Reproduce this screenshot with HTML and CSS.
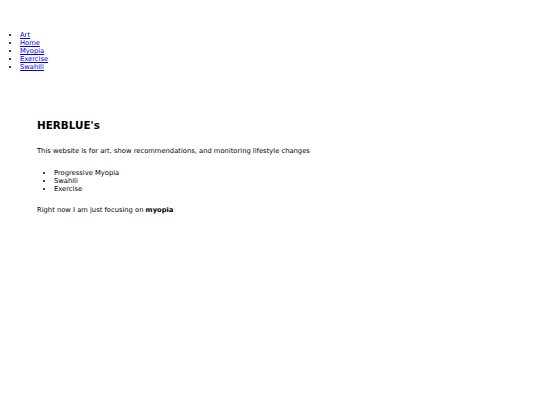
FILE: index.html
```html
<!DOCTYPE html>
<html>
<head>
<meta charset="utf-8">
<link rel="stylesheet" href="styles.css">
</head>
<body>
<nav class="nav">
  <ul class="nav-list">
    <li><a href="#">Art</a></li>
    <li><a href="#">Home</a></li>
    <li><a href="#">Myopia</a></li>
    <li><a href="#">Exercise</a></li>
    <li><a href="#">Swahili</a></li>
  </ul>
</nav>
<main class="main">
  <h1 class="title">HERBLUE's</h1>
  <p class="text">This website is for art, show recommendations, and monitoring lifestyle changes</p>
  <ul class="topics">
    <li>Progressive Myopia</li>
    <li>Swahili</li>
    <li>Exercise</li>
  </ul>
  <p class="text">Right now I am just focusing on <b>myopia</b></p>
</main>
</body>
</html>
```
FILE: styles.css
```css
html, body {
  margin: 0;
  padding: 0;
  background: #fff;
}
body {
  font-family: "DejaVu Sans", Verdana, sans-serif;
  font-size: 6.75px;
  line-height: 8px;
  color: #000;
}
.nav {
  padding-top: 31px;
}
.nav-list {
  margin: 0;
  padding-left: 20px;
}
.nav-list a {
  color: #0000ee;
}
.main {
  padding: 0 37px;
  margin-top: 47px;
}
.title {
  font-size: 10.4px;
  line-height: 14px;
  margin: 0 0 15px;
}
.text {
  margin: 0;
}
.topics {
  margin: 14px 0 13px;
  padding-left: 17px;
}
```
